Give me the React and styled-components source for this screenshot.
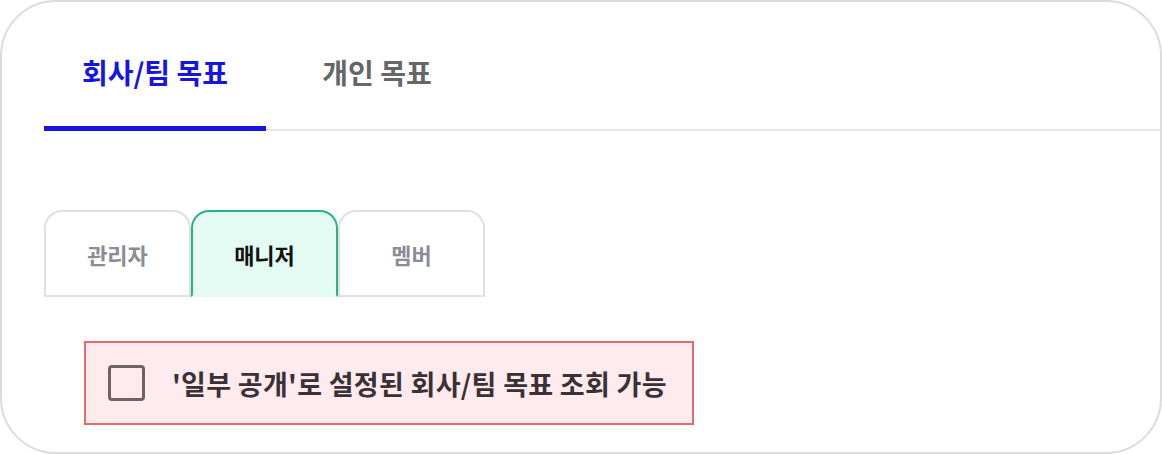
import React, { useState } from "react";
import styled, { createGlobalStyle } from "styled-components";

const GlobalStyle = createGlobalStyle`
    html, body {
        margin: 0;
        padding: 0;
        background: #ffffff;
    }
    body {
        font-family: "Noto Sans CJK KR", "Noto Sans", sans-serif;
    }
`;

const goalTabs = ["회사/팀 목표", "개인 목표"];
const roleTabs = ["관리자", "매니저", "멤버"];

const App = () => {
    const [goalTab, setGoalTab] = useState(0);
    const [role, setRole] = useState(1);
    const [checked, setChecked] = useState(false);

    return (
        <>
            <GlobalStyle />
            <Card>
                <TabBar>
                    {goalTabs.map((label, i) => (
                        <MainTab
                            key={label}
                            $active={goalTab === i}
                            onClick={() => setGoalTab(i)}
                        >
                            {label}
                        </MainTab>
                    ))}
                </TabBar>

                <RoleRow>
                    {roleTabs.map((label, i) => (
                        <RoleTab
                            key={label}
                            $active={role === i}
                            onClick={() => setRole(i)}
                        >
                            {label}
                        </RoleTab>
                    ))}
                </RoleRow>

                <PermissionBox>
                    <CheckLabel>
                        <HiddenInput
                            type="checkbox"
                            checked={checked}
                            onChange={(e) => setChecked(e.target.checked)}
                        />
                        <Box $checked={checked} />
                        <LabelText>'일부 공개'로 설정된 회사/팀 목표 조회 가능</LabelText>
                    </CheckLabel>
                </PermissionBox>
            </Card>
        </>
    );
};

export default App;

const Card = styled.div`
    width: 1162px;
    height: 454px;
    box-sizing: border-box;
    border: 2px solid #dcdcdc;
    border-radius: 56px;
    padding-left: 42px;
    overflow: hidden;
`;

const TabBar = styled.div`
    display: flex;
    border-bottom: 2px solid #e6e6ea;
`;

const MainTab = styled.button`
    width: 222px;
    padding: 52px 0 36px;
    margin-bottom: -2px;
    border: none;
    border-bottom: 5px solid ${(p) => (p.$active ? "#1616e0" : "transparent")};
    background: none;
    font-family: inherit;
    font-size: 28px;
    line-height: 36px;
    font-weight: 700;
    color: ${(p) => (p.$active ? "#1616e0" : "#666666")};
    cursor: pointer;
`;

const RoleRow = styled.div`
    display: flex;
    width: fit-content;
    margin-top: 79px;
    border-bottom: 2px solid #e2e2e6;
`;

const RoleTab = styled.button`
    width: 147px;
    height: 87px;
    margin-bottom: -2px;
    box-sizing: border-box;
    border: 2px solid ${(p) => (p.$active ? "#2bb382" : "#e0e0e4")};
    border-bottom: 2px solid ${(p) => (p.$active ? "#e3fbf2" : "#e2e2e6")};
    border-radius: 18px 18px 0 0;
    background: ${(p) => (p.$active ? "#e3fbf2" : "#ffffff")};
    font-family: inherit;
    font-size: 22px;
    font-weight: 700;
    color: ${(p) => (p.$active ? "#111111" : "#8b8c94")};
    cursor: pointer;
`;

const PermissionBox = styled.div`
    width: 610px;
    height: 84px;
    box-sizing: border-box;
    margin: 44px 0 0 40px;
    padding-left: 22px;
    display: flex;
    align-items: center;
    border: 2px solid #e56a6c;
    background: #ffebee;
`;

const CheckLabel = styled.label`
    display: flex;
    align-items: center;
    gap: 27px;
    cursor: pointer;
`;

const HiddenInput = styled.input`
    position: absolute;
    opacity: 0;
    width: 0;
    height: 0;
`;

const Box = styled.span`
    width: 37px;
    height: 36px;
    box-sizing: border-box;
    border: 3px solid #6e6262;
    border-radius: 4px;
    background: ${(p) => (p.$checked ? "#6e6262" : "transparent")};
`;

const LabelText = styled.span`
    font-size: 27px;
    font-weight: 700;
    letter-spacing: 0.3px;
    color: #3a3136;
`;
